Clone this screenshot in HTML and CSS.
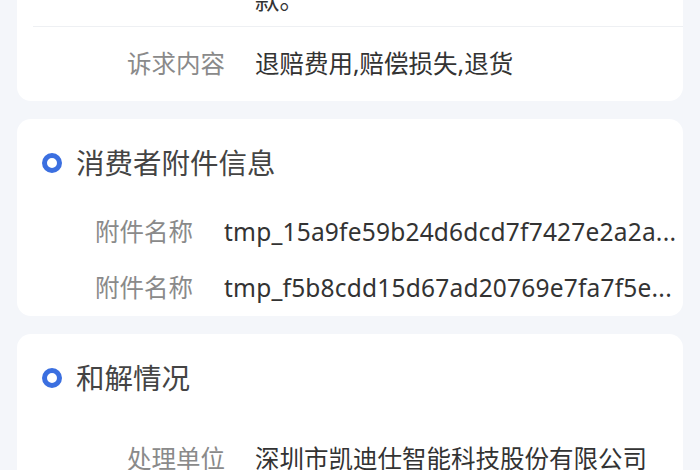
FILE: index.html
```html
<!DOCTYPE html>
<html lang="zh-CN">
<head>
<meta charset="utf-8">
<title>投诉详情</title>
<link rel="stylesheet" href="styles.css">
</head>
<body>
<div class="page">
  <section class="card card--first">
    <div class="row row--tail">
      <div class="label"></div>
      <div class="value">款。</div>
    </div>
    <div class="divider"></div>
    <div class="row row--claim">
      <div class="label">诉求内容</div>
      <div class="value">退赔费用,赔偿损失,退货</div>
    </div>
  </section>

  <section class="card">
    <h2 class="card-title"><span class="dot"></span>消费者附件信息</h2>
    <div class="rows rows--attach">
      <div class="row">
        <div class="label label--narrow">附件名称</div>
        <div class="value value--file">tmp_15a9fe59b24d6dcd7f7427e2a2a...</div>
      </div>
      <div class="row">
        <div class="label label--narrow">附件名称</div>
        <div class="value value--file">tmp_f5b8cdd15d67ad20769e7fa7f5e...</div>
      </div>
    </div>
  </section>

  <section class="card">
    <h2 class="card-title"><span class="dot"></span>和解情况</h2>
    <div class="rows rows--settle">
      <div class="row">
        <div class="label">处理单位</div>
        <div class="value">深圳市凯迪仕智能科技股份有限公司</div>
      </div>
    </div>
  </section>
</div>
</body>
</html>
```

FILE: styles.css
```css
html, body {
  margin: 0;
  padding: 0;
}

body {
  background: #f4f6fa;
  font-family: "Noto Sans", "Noto Sans CJK SC", sans-serif;
  color: #333333;
  overflow: hidden;
}

.page {
  display: flex;
  flex-direction: column;
  gap: 18px;
  padding: 0 17px;
}

.card {
  background: #ffffff;
  border-radius: 14px;
}

.card--first {
  margin-top: -39px;
  border-radius: 0 0 14px 14px;
}

.row {
  display: flex;
  align-items: flex-start;
  padding: 10px 0;
  line-height: 36px;
  font-size: 24.5px;
}

.row--tail {
  padding: 21px 0 8px;
}

.row--claim {
  padding: 19px 0 19px;
}

.divider {
  height: 1px;
  margin-left: 16px;
  background: #eef0f3;
}

.label {
  flex: 0 0 208px;
  text-align: right;
  color: #8a8a8a;
  white-space: nowrap;
}

.label--narrow {
  flex-basis: 176px;
}

.value {
  flex: 1 1 auto;
  min-width: 0;
  margin-left: 30px;
  color: #333333;
  white-space: nowrap;
  overflow: hidden;
  text-overflow: ellipsis;
}

.value--file {
  margin-left: 31px;
  padding-right: 4px;
  letter-spacing: 0.2px;
}

.card-title {
  display: flex;
  align-items: center;
  gap: 14px;
  margin: 0;
  padding: 22px 18px 0 25px;
  height: 44px;
  line-height: 44px;
  font-size: 28.5px;
  font-weight: 400;
  color: #444444;
}

.dot {
  flex: 0 0 auto;
  width: 20px;
  height: 20px;
  box-sizing: border-box;
  border: 5px solid #3b6fe0;
  border-radius: 50%;
}

.rows--attach {
  margin-top: 19px;
}

.rows--settle {
  margin-top: 31px;
}
```
